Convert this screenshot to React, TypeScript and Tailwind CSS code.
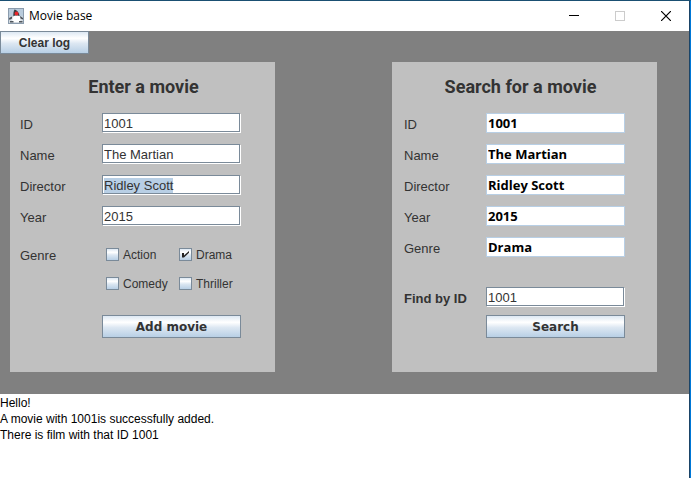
import { useEffect, useRef, useState } from "react";
import type { ReactNode, Ref } from "react";

const SANS = "font-['Liberation_Sans',Arial,sans-serif]";

function JavaIcon() {
  return (
    <svg width="16" height="16" viewBox="0 0 16 16" aria-hidden="true">
      <rect width="16" height="16" fill="#8b9cad" />
      <rect x="1" y="1" width="14" height="14" fill="#b9cbdc" />
      <path d="M1 8.500h14V15H1z" fill="#d3dae1" />
      <path d="M6.500 1.500c1.800.3 4.500 2.500 5 6.500l-6 1C5 6 5.500 3.500 6.500 1.500z" fill="#3a3d42" />
      <path d="M5 8.500c1.500-1.500 5.500-1.500 7 0l.5 5.500H4z" fill="#fff" />
      <path d="M1 10l3-1.500v2L1.500 12zM12 8l3 2v1.500l-2.500-1z" fill="#4a5057" />
      <path d="M2 13h3.500v1.500H2zM11 13h3.500v1.500H11z" fill="#50565d" />
      <circle cx="8.500" cy="5.500" r="1.900" fill="#e8262b" />
    </svg>
  );
}

function TitleBar() {
  return (
    <header className="flex h-[30px] items-center bg-white pl-2">
      <JavaIcon />
      <h1 className="ml-[5px] flex-1 font-['Open_Sans','Noto_Sans',sans-serif] text-[12px] leading-4 text-black">
        Movie base
      </h1>
      <button aria-label="Minimize" className="flex h-full w-[46px] items-center justify-center">
        <svg width="10" height="10" shapeRendering="crispEdges">
          <path d="M0 4.500h10" stroke="#000" />
        </svg>
      </button>
      <button aria-label="Maximize" disabled className="flex h-full w-[46px] items-center justify-center">
        <svg width="10" height="10" shapeRendering="crispEdges">
          <rect x=".5" y=".5" width="9" height="9" fill="none" stroke="#ccc" />
        </svg>
      </button>
      <button aria-label="Close" className="flex h-full w-[46px] items-center justify-center">
        <svg width="10" height="10">
          <path d="M0 0l10 10M10 0L0 10" stroke="#000" strokeWidth="1.200" />
        </svg>
      </button>
    </header>
  );
}

const STEEL =
  "border border-[#7a8a99] bg-[linear-gradient(#dde8f3_0%,#ffffff_30%,#dce7f2_55%,#b8cfe5_100%)]";

function WideButton({ children }: { children: ReactNode }) {
  return (
    <button
      type="button"
      className={`ml-[82px] block h-[23px] w-[139px] font-['DejaVu_Sans',Verdana,sans-serif] text-[12px] font-bold leading-none text-[#333333] ${STEEL}`}
    >
      {children}
    </button>
  );
}

function Field(props: {
  id: string;
  label: string;
  value: string;
  result?: boolean;
  bold?: boolean;
  inputRef?: Ref<HTMLInputElement>;
}) {
  const look = props.result
    ? "h-5 w-[139px] border-[#b8cfe5] font-['Open_Sans','Noto_Sans',sans-serif] font-bold text-black"
    : `mr-px mb-px h-[19px] w-[138px] border-[#7a8a99] pt-px text-[#333333] shadow-[1px_1px_0_#ffffff] ${SANS}`;
  return (
    <div className="flex h-5">
      <label
        htmlFor={props.id}
        className={`w-[82px] shrink-0 pt-0.5 text-[13px] leading-5 text-[#333333] ${props.bold ? "font-bold" : ""}`}
      >
        {props.label}
      </label>
      <input
        id={props.id}
        ref={props.inputRef}
        defaultValue={props.value}
        readOnly={props.result}
        className={`rounded-none border bg-white px-px text-[13px] leading-4 outline-none selection:bg-[#b8cfe5] selection:text-[#333333] ${look}`}
      />
    </div>
  );
}

function Genre({ name, initial = false }: { name: string; initial?: boolean }) {
  const [on, setOn] = useState(initial);
  return (
    <label className="flex h-[13px] gap-1 text-[12px] leading-[15px] text-[#333333]">
      <span className="grid size-[13px] shrink-0">
        <input
          type="checkbox"
          checked={on}
          onChange={(e) => setOn(e.target.checked)}
          className={`col-start-1 row-start-1 size-[13px] appearance-none ${STEEL}`}
        />
        {on && (
          <svg className="pointer-events-none col-start-1 row-start-1" width="13" height="13" aria-hidden="true">
            <path d="M3 5h2v2.500L10 3v1.800L5 9.500H3z" fill="#222" />
          </svg>
        )}
      </span>
      {name}
    </label>
  );
}

function Heading({ children }: { children: ReactNode }) {
  return (
    <h2 className="pb-0.5 text-center font-[Roboto,sans-serif] text-[18px] font-bold leading-[49px] text-[#333333]">
      {children}
    </h2>
  );
}

export default function App() {
  const director = useRef<HTMLInputElement>(null);
  const [log, setLog] = useState(
    "Hello!\nA movie with 1001is successfully added.\nThere is film with that ID 1001",
  );

  useEffect(() => {
    director.current?.focus();
    director.current?.select();
  }, []);

  return (
    <div className={`border-t border-r border-t-[#1a4f72] border-r-[#0078d7] ${SANS}`}>
      <div className="flex min-h-[calc(100vh-1px)] flex-col border-r border-[#1b4467]">
        <TitleBar />
        <main className="bg-[#808080] pb-[22px]">
          <button
            type="button"
            onClick={() => setLog("")}
            className={`block h-[23px] w-[89px] text-[12px] font-bold leading-none text-[#333333] ${STEEL}`}
          >
            Clear log
          </button>
          <div className="mt-2 grid grid-cols-2 gap-x-[117px] pr-8 pl-[10px]">
            <form className="bg-[#c0c0c0] pr-2 pb-[34px] pl-[10px]">
              <Heading>Enter a movie</Heading>
              <div className="flex flex-col gap-[11px]">
                <Field id="new-id" label="ID" value="1001" />
                <Field id="new-name" label="Name" value="The Martian" />
                <Field id="new-director" label="Director" value="Ridley Scott" inputRef={director} />
                <Field id="new-year" label="Year" value="2015" />
              </div>
              <fieldset className="mt-[22px] mb-[25px] flex">
                <legend className="float-left w-[86px] text-[13px] leading-4 text-[#333333]">Genre</legend>
                <div className="grid grid-cols-[69px_auto] gap-x-1 gap-y-4">
                  <Genre name="Action" />
                  <Genre name="Drama" initial />
                  <Genre name="Comedy" />
                  <Genre name="Thriller" />
                </div>
              </fieldset>
              <WideButton>Add movie</WideButton>
            </form>
            <form className="bg-[#c0c0c0] pr-5 pb-[34px] pl-3">
              <Heading>Search for a movie</Heading>
              <div className="flex flex-col gap-[11px]">
                <Field id="found-id" label="ID" value="1001" result />
                <Field id="found-name" label="Name" value="The Martian" result />
                <Field id="found-director" label="Director" value="Ridley Scott" result />
                <Field id="found-year" label="Year" value="2015" result />
                <Field id="found-genre" label="Genre" value="Drama" result />
              </div>
              <div className="mt-[30px] mb-2">
                <Field id="find-id" label="Find by ID" value="1001" bold />
              </div>
              <WideButton>Search</WideButton>
            </form>
          </div>
        </main>
        <textarea
          aria-label="Log"
          readOnly
          value={log}
          className="block w-full flex-1 resize-none bg-white pt-px text-[12px] leading-4 text-black outline-none"
        />
      </div>
    </div>
  );
}
